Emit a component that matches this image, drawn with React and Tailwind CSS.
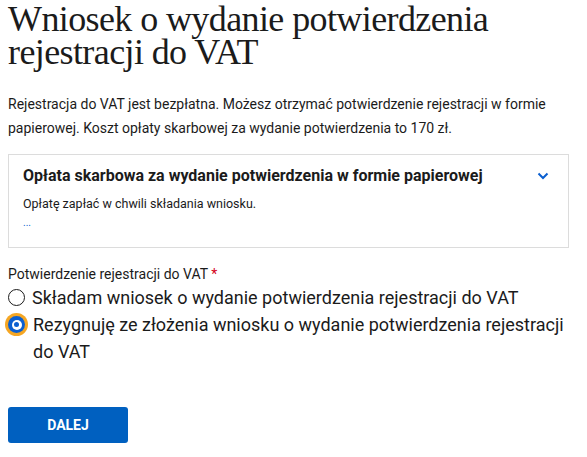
export default function App() {
  return (
    <div className="w-[587px] h-[457px] bg-white px-2 text-[#1b1b1b]" style={{ fontFamily: 'Roboto, "Liberation Sans", sans-serif' }}>
      <h1 className="pt-[3px] text-[36px] leading-[33px] tracking-[-0.6px] text-[#1b1b1b] whitespace-nowrap" style={{ fontFamily: '"Liberation Serif", serif' }}>
        Wniosek o wydanie potwierdzenia
        <br />
        rejestracji do VAT
      </h1>
      <p className="mt-[23px] text-[14px] leading-[24px]">
        Rejestracja do VAT jest bezpłatna. Możesz otrzymać potwierdzenie rejestracji w formie papierowej. Koszt opłaty skarbowej za wydanie potwierdzenia to 170 zł.
      </p>
      <div className="mt-[14px] w-[561px] h-[94px] border border-[#dcdcdc] px-[14px] pt-[10px]">
        <div className="flex items-center justify-between">
          <span className="text-[16px] font-bold leading-[22px]">Opłata skarbowa za wydanie potwierdzenia w formie papierowej</span>
          <svg width="12" height="8" viewBox="0 0 12 8" className="mr-[5px]">
            <path d="M1.5 1.5 L6 6 L10.5 1.5" fill="none" stroke="#0b5fd0" strokeWidth="2" />
          </svg>
        </div>
        <div className="mt-[8px] text-[12.5px] leading-[18px]">Opłatę zapłać w chwili składania wniosku.</div>
        <div className="mt-[3px] text-[10px] leading-[14px] text-[#0b5fd0]">...</div>
      </div>
      <div className="mt-[16px] text-[14px] leading-[20px]">
        Potwierdzenie rejestracji do VAT <span className="text-[#d4001a]">*</span>
      </div>
      <label className="flex items-center gap-[7px] text-[18px] leading-[27px]">
        <span className="w-[17px] h-[17px] rounded-full border-[1.5px] border-[#1b1b1b] bg-white shrink-0" />
        <span>Składam wniosek o wydanie potwierdzenia rejestracji do VAT</span>
      </label>
      <label className="relative block pl-[25px] text-[18px] leading-[27px] pr-[14px]">
        <span className="absolute left-[-3px] top-[2px] w-[23px] h-[23px] rounded-full bg-[#f5a623] flex items-center justify-center">
          <span className="w-[17px] h-[17px] rounded-full bg-[#0b5fd0] flex items-center justify-center">
            <span className="w-[10px] h-[10px] rounded-full bg-white flex items-center justify-center">
              <span className="w-[5px] h-[5px] rounded-full bg-[#0b5fd0]" />
            </span>
          </span>
        </span>
        Rezygnuję ze złożenia wniosku o wydanie potwierdzenia rejestracji
        <br />
        do VAT
      </label>
      <button className="mt-[42px] w-[120px] h-[36px] rounded-[3px] bg-[#0060c0] text-white text-[14px] font-bold">DALEJ</button>
    </div>
  );
}
